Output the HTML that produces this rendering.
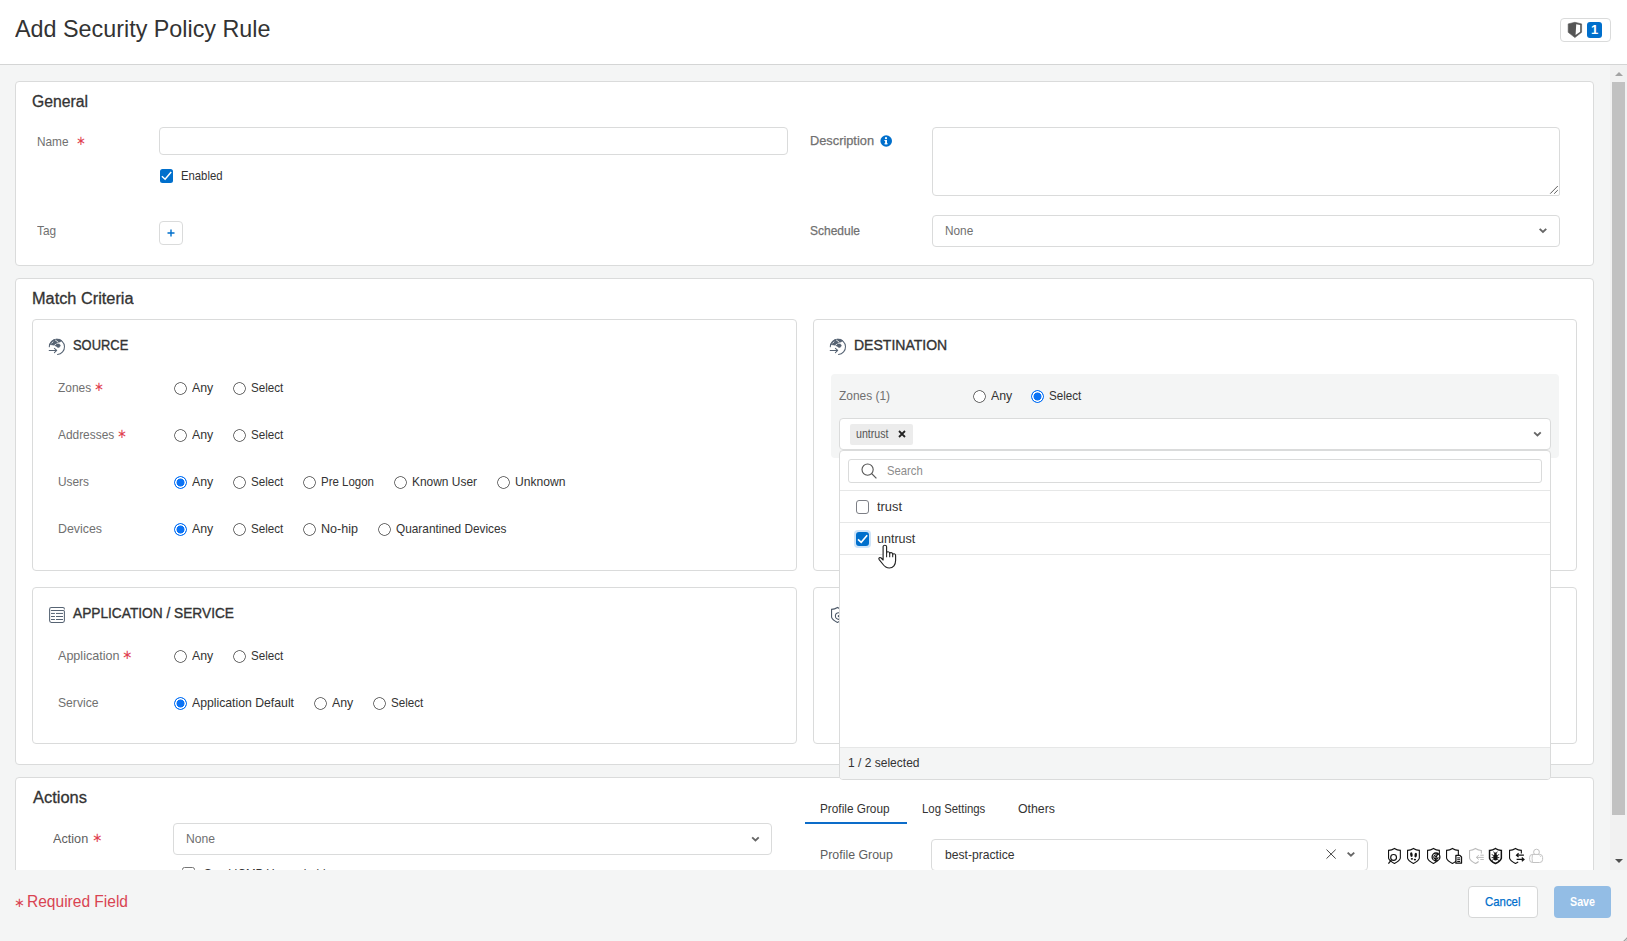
<!DOCTYPE html>
<html lang="en"><head>
<meta charset="utf-8">
<title>Add Security Policy Rule</title>
<style>
*{box-sizing:border-box;margin:0;padding:0}
html,body{width:1627px;height:941px;overflow:hidden;background:#f4f5f5}
body{font-family:"Liberation Sans",sans-serif;font-size:13px;color:#333;position:relative}
#app{position:absolute;left:0;top:0;width:1627px;height:941px;overflow:hidden;background:#f4f5f5}
.abs{position:absolute}
.t{position:absolute;white-space:nowrap;line-height:16px;height:16px;font-size:13px;color:#333;transform-origin:0 50%;transform:scaleX(0.91)}
.lbl{color:#707070}
.panel{position:absolute;background:#fff;border:1px solid #dadbdb;border-radius:4px}
.h1{position:absolute;white-space:nowrap;font-size:16px;line-height:20px;height:20px;color:#333;transform-origin:0 50%;transform:scaleX(0.93);-webkit-text-stroke:0.3px #333}
.h2{position:absolute;white-space:nowrap;font-size:14px;line-height:18px;height:18px;color:#333;transform-origin:0 50%;transform:scaleX(0.93);-webkit-text-stroke:0.35px #333}
.req{color:#df4150}
.ast{position:relative;top:-0.7px;margin-left:3px}
.b{-webkit-text-stroke:0.25px currentColor}
.inp{position:absolute;background:#fff;border:1px solid #dadbdb;border-radius:4px}
.radio{position:absolute;margin-top:1px;width:13px;height:13px;border-radius:50%;background:radial-gradient(circle at 50% 50%,#fff 0,#fff 5.05px,#6f6f6f 5.55px,#6f6f6f 6.2px,rgba(111,111,111,0) 6.75px)}
.radio.on{border:none;background:radial-gradient(circle at 50% 50%,#0b73f5 0,#0b73f5 3.7px,#fff 4.3px,#fff 5.0px,#0b73f5 5.5px,#0b73f5 6.3px,rgba(11,115,245,0) 6.8px)}
.cb{position:absolute;width:13px;height:13px;border:1px solid #767676;border-radius:2.5px;background:#fff}
.cb.on{border:none;background:#006fcc}
svg{position:absolute;overflow:visible}
</style>
</head>
<body>
<div id="app">

<!-- ============ HEADER ============ -->
<div class="abs" id="hdr" style="left:0;top:0;width:1627px;height:65px;background:#fff;border-bottom:1px solid #d4d5d5"></div>
<div class="abs" id="title" style="left: 14.6px; top: 14px; font-size: 24px; line-height: 30px; color: rgb(51, 51, 51); white-space: nowrap; transform-origin: 0px 50%; transform: scaleX(0.9723);">Add Security Policy Rule</div>
<div class="abs" id="badgebtn" style="left:1560px;top:18px;width:51px;height:24px;border:1px solid #dadbdb;border-radius:4px;background:#fff"></div>
<svg id="shield" style="left:1567px;top:22px" width="16" height="16" viewBox="0 0 16 16"><path d="M7.9 0.3 L14.6 1.9 V10.3 L7.9 15.6 L1.2 10.3 V1.9 Z" fill="#555" stroke="#555" stroke-width="0.6" stroke-linejoin="round"></path><path d="M9.2 2.3 L13.2 3.1 V9.7 L8.6 13.1 Z" fill="#fff"></path></svg>
<div class="abs" id="badge" style="left:1587px;top:22px;width:15px;height:16px;border-radius:3px;background:#006fcc;color:#fff;font-size:13px;line-height:16px;text-align:center;font-weight:bold">1</div>

<!-- ============ SCROLL AREA ============ -->
<div class="abs" id="scroll" style="left:0;top:65px;width:1611px;height:805px;overflow:hidden">
<div class="abs" id="inner" style="left:0;top:-65px;width:1611px;height:941px">

<!-- ===== GENERAL PANEL ===== -->
<div class="panel" id="p-general" style="left:15px;top:81px;width:1579px;height:185px"></div>
<div class="h1" style="left: 32px; top: 92px; transform: scaleX(0.9838);">General</div>
<div class="t lbl" style="left:37px;top:133.5px">Name<span class="req ast" style="margin-left:8px">∗</span></div>
<div class="inp" style="left:159px;top:127px;width:629px;height:28px"></div>
<div class="cb on" style="left:160px;top:169px;height:14px"></div>
<svg style="left:160px;top:169px" width="13" height="14" viewBox="0 0 13 14"><path d="M1.9 7.3 L5.1 10.2 L11.2 3.0" fill="none" stroke="#fff" stroke-width="1.5"></path></svg>
<div class="t" style="left: 181px; top: 168px; transform: scaleX(0.8697);">Enabled</div>
<div class="t lbl" style="left:37px;top:223px">Tag</div>
<div class="inp" style="left:159px;top:221px;width:24px;height:24px"></div>
<svg style="left:167px;top:229px" width="8" height="8" viewBox="0 0 8 8"><path d="M4 0.5 V7.5 M0.5 4 H7.5" stroke="#006fcc" stroke-width="1.4" fill="none"></path></svg>
<div class="t lbl b" style="left: 809.5px; top: 133px; transform: scaleX(0.9841);">Description</div>
<svg style="left:880px;top:135px" width="12" height="12" viewBox="0 0 12 12"><circle cx="6.2" cy="6" r="5.8" fill="#006fcc"></circle><rect x="5.1" y="5" width="1.9" height="4.2" fill="#fff"></rect><rect x="4.4" y="5" width="1.6" height="1" fill="#fff"></rect><rect x="4.4" y="8.3" width="3.3" height="1" fill="#fff"></rect><circle cx="6" cy="3.2" r="1.1" fill="#fff"></circle></svg>
<div class="inp" style="left:932px;top:127px;width:628px;height:69px;border-bottom-right-radius:2px"></div>
<svg style="left:1548px;top:185px" width="10" height="10" viewBox="0 0 10 10"><path d="M9.8 1.0 L2.2 8.7 M9.8 5.1 L6.2 8.7" stroke="#4a4a4a" stroke-width="0.9" fill="none"></path></svg>
<div class="t lbl b" style="left: 809.5px; top: 223px; transform: scaleX(0.9222);">Schedule</div>
<div class="inp" style="left:932px;top:215px;width:628px;height:32px"></div>
<div class="t lbl" style="left:945px;top:223px">None</div>
<svg class="chev" style="left:1538px;top:228px" width="10" height="7" viewBox="0 0 10 7"><path transform="translate(0.4,-0.4)" d="M1.25 1.3 L4.55 4.3 L7.85 1.3" fill="none" stroke="#666" stroke-width="1.9"></path></svg>

<!-- ===== MATCH CRITERIA PANEL ===== -->
<div class="panel" id="p-match" style="left:15px;top:278px;width:1579px;height:487px"></div>
<div class="h1" style="left: 32px; top: 289px; transform: scaleX(1.0193);">Match Criteria</div>
<div class="panel" id="b-source" style="left:32px;top:319px;width:765px;height:252px"></div>
<svg class="globe" style="left:48px;top:338px" width="18" height="18" viewBox="0 0 18 18"><g transform="translate(0.5,0.5)"><path d="M0.8 8.2 A7.6 7.6 0 1 1 9.0 16.0" fill="none" stroke="#566373" stroke-width="1.05" stroke-linecap="round"></path><path d="M1.5 6.0 L2.7 3.4 L4.9 1.5 L7.5 0.7 L10.8 0.8 L13.4 2.1 L11.6 3.4 L9.0 4.0 L7.9 5.4 L10.8 5.4 L11.9 7.1 L10.9 8.7 L9.4 9.1 L7.9 7.9 L6.0 6.8 L3.8 6.4 Z" fill="#566373" stroke="#566373" stroke-width="0.5" stroke-linejoin="round"></path><path d="M6.9 1.6 L9.4 3.4 M7.6 5.6 L6.2 6.6 M3.4 4.6 L4.4 3.4" stroke="#fff" stroke-width="0.8" stroke-linecap="round"></path><path d="M0.7 11.95 H8.0 M5.9 9.8 L8.2 11.95 L5.9 14.1" fill="none" stroke="#566373" stroke-width="1.05" stroke-linecap="round" stroke-linejoin="round"></path></g></svg>
<div class="h2" style="left: 73px; top: 336px; transform: scaleX(0.9231);">SOURCE</div>
<div class="t lbl" style="left: 58px; top: 380px; transform: scaleX(0.9174);">Zones<span class="req ast">∗</span></div>
<div class="radio" style="left:174px;top:381px"></div>
<div class="t" style="left: 192px; top: 380px; transform: scaleX(0.9506);">Any</div>
<div class="radio" style="left:233px;top:381px"></div>
<div class="t" style="left: 251px; top: 380px; transform: scaleX(0.8937);">Select</div>
<div class="t lbl" style="left: 58px; top: 427px; transform: scaleX(0.9149);">Addresses<span class="req ast">∗</span></div>
<div class="radio" style="left:174px;top:428px"></div>
<div class="t" style="left: 192px; top: 427px; transform: scaleX(0.9506);">Any</div>
<div class="radio" style="left:233px;top:428px"></div>
<div class="t" style="left: 251px; top: 427px; transform: scaleX(0.8937);">Select</div>
<div class="t lbl" style="left: 58px; top: 474px; transform: scaleX(0.913);">Users</div>
<div class="radio on" style="left:174px;top:475px"></div>
<div class="t" style="left: 192px; top: 474px; transform: scaleX(0.9506);">Any</div>
<div class="radio" style="left:233px;top:475px"></div>
<div class="t" style="left: 251px; top: 474px; transform: scaleX(0.8937);">Select</div>
<div class="radio" style="left:303px;top:475px"></div>
<div class="t" style="left: 321px; top: 474px; transform: scaleX(0.8833);">Pre Logon</div>
<div class="radio" style="left:394px;top:475px"></div>
<div class="t" style="left: 412px; top: 474px; transform: scaleX(0.9179);">Known User</div>
<div class="radio" style="left:497px;top:475px"></div>
<div class="t" style="left: 515px; top: 474px; transform: scaleX(0.9317);">Unknown</div>
<div class="t lbl" style="left: 58px; top: 521px; transform: scaleX(0.9514);">Devices</div>
<div class="radio on" style="left:174px;top:522px"></div>
<div class="t" style="left: 192px; top: 521px; transform: scaleX(0.9506);">Any</div>
<div class="radio" style="left:233px;top:522px"></div>
<div class="t" style="left: 251px; top: 521px; transform: scaleX(0.8937);">Select</div>
<div class="radio" style="left:303px;top:522px"></div>
<div class="t" style="left: 321px; top: 521px; transform: scaleX(0.9661);">No-hip</div>
<div class="radio" style="left:378px;top:522px"></div>
<div class="t" style="left: 396px; top: 521px; transform: scaleX(0.9102);">Quarantined Devices</div>
<div class="panel" id="b-dest" style="left:813px;top:319px;width:764px;height:252px"></div>
<svg class="globe" style="left:829px;top:338px" width="18" height="18" viewBox="0 0 18 18"><g transform="translate(0.5,0.5)"><path d="M0.8 8.2 A7.6 7.6 0 1 1 9.0 16.0" fill="none" stroke="#566373" stroke-width="1.05" stroke-linecap="round"></path><path d="M1.5 6.0 L2.7 3.4 L4.9 1.5 L7.5 0.7 L10.8 0.8 L13.4 2.1 L11.6 3.4 L9.0 4.0 L7.9 5.4 L10.8 5.4 L11.9 7.1 L10.9 8.7 L9.4 9.1 L7.9 7.9 L6.0 6.8 L3.8 6.4 Z" fill="#566373" stroke="#566373" stroke-width="0.5" stroke-linejoin="round"></path><path d="M6.9 1.6 L9.4 3.4 M7.6 5.6 L6.2 6.6 M3.4 4.6 L4.4 3.4" stroke="#fff" stroke-width="0.8" stroke-linecap="round"></path><path d="M0.7 11.95 H8.0 M5.9 9.8 L8.2 11.95 L5.9 14.1" fill="none" stroke="#566373" stroke-width="1.05" stroke-linecap="round" stroke-linejoin="round"></path></g></svg>
<div class="h2" style="left: 854px; top: 336px; transform: scaleX(1.0013);">DESTINATION</div>
<div class="abs" id="zonebg" style="left:831px;top:374px;width:728px;height:84px;background:#f4f5f5;border-radius:4px"></div>
<div class="t lbl" style="left: 838.5px; top: 388px; transform: scaleX(0.9166);">Zones (1)</div>
<div class="radio" style="left:973px;top:389px"></div>
<div class="t" style="left: 991px; top: 388px; transform: scaleX(0.9506);">Any</div>
<div class="radio on" style="left:1031px;top:389px"></div>
<div class="t" style="left: 1049px; top: 388px; transform: scaleX(0.8937);">Select</div>
<div class="inp" id="zonesel" style="left:839px;top:418px;width:712px;height:32px"></div>
<div class="abs" id="ztag" style="left:850px;top:424px;width:63px;height:21px;background:#ececec;border-radius:2px"></div>
<div class="t" style="left: 855.5px; top: 426px; font-size: 12px; color: rgb(85, 85, 85); transform: scaleX(0.8859);">untrust</div>
<svg style="left:898px;top:430px" width="8" height="8" viewBox="0 0 8 8"><path d="M1 1 L7 7 M7 1 L1 7" stroke="#222" stroke-width="1.8" fill="none"></path></svg>
<svg class="chev" style="left:1532px;top:431px" width="10" height="7" viewBox="0 0 10 7"><path transform="translate(0.9,0.1)" d="M1.25 1.3 L4.55 4.3 L7.85 1.3" fill="none" stroke="#666" stroke-width="1.9"></path></svg>
<div class="panel" id="b-app" style="left:32px;top:587px;width:765px;height:157px"></div>
<svg class="appi" style="left:48px;top:606px" width="18" height="18" viewBox="0 0 18 18"><path d="M16.4 3.0 V2.9 A1.5 1.5 0 0 0 14.9 1.4 H3.4 A1.8 1.8 0 0 0 1.6 3.2 V14.6 A1.8 1.8 0 0 0 3.4 16.4 H14.6 A1.8 1.8 0 0 0 16.4 14.6 V5.6 A1.1 1.1 0 0 0 15.3 4.5 H3.3" fill="none" stroke="#566373" stroke-width="1.05" stroke-linecap="round"></path><path d="M3.4 7.45 H6.5 M8.4 7.45 H14.6 M3.4 10.5 H6.5 M8.4 10.5 H14.6 M3.4 13.5 H6.5 M8.4 13.5 H14.6" stroke="#566373" stroke-width="1" stroke-linecap="round" fill="none"></path></svg>
<div class="h2" style="left: 73px; top: 604px; transform: scaleX(0.9792);">APPLICATION / SERVICE</div>
<div class="t lbl" style="left: 58px; top: 648px; transform: scaleX(0.9664);">Application<span class="req ast">∗</span></div>
<div class="radio" style="left:174px;top:649px"></div>
<div class="t" style="left: 192px; top: 648px; transform: scaleX(0.9506);">Any</div>
<div class="radio" style="left:233px;top:649px"></div>
<div class="t" style="left: 251px; top: 648px; transform: scaleX(0.8937);">Select</div>
<div class="t lbl" style="left: 58px; top: 695px; transform: scaleX(0.9341);">Service</div>
<div class="radio on" style="left:174px;top:696px"></div>
<div class="t" style="left: 192px; top: 695px; transform: scaleX(0.9409);">Application Default</div>
<div class="radio" style="left:314px;top:696px"></div>
<div class="t" style="left: 332px; top: 695px; transform: scaleX(0.9506);">Any</div>
<div class="radio" style="left:373px;top:696px"></div>
<div class="t" style="left: 391px; top: 695px; transform: scaleX(0.8937);">Select</div>
<div class="panel" id="b-misc" style="left:813px;top:587px;width:764px;height:157px"></div>
<svg style="left:830px;top:607px" width="17" height="17" viewBox="0 0 17 17"><path d="M7.45 0.5 C5.9 1.6 3.8 2.4 1.55 2.4 V10.2 Q2.3 13.0 7.45 15.5 Q12.6 13.0 13.35 10.2 V2.4 C11.1 2.4 9.0 1.6 7.45 0.5 Z" fill="none" stroke="#4d5968" stroke-width="1.1"></path><circle cx="8.7" cy="9.1" r="3.3" fill="none" stroke="#4d5968" stroke-width="1.1"></circle><circle cx="8.9" cy="9.1" r="1.2" fill="#4d5968"></circle></svg>
<!-- ===== ACTIONS PANEL ===== -->
<div class="panel" id="p-actions" style="left:15px;top:777px;width:1579px;height:300px"></div>
<div class="h1" style="left: 32.5px; top: 788px; transform: scaleX(1.0292);">Actions</div>
<div class="t lbl" style="left: 53px; top: 831px; color: rgb(94, 94, 94); transform: scaleX(0.9741);">Action<span class="req ast" style="margin-left:4.2px">∗</span></div>
<div class="inp" style="left:173px;top:823px;width:599px;height:32px"></div>
<div class="t lbl" style="left: 186px; top: 831px; transform: scaleX(0.9331);">None</div>
<svg class="chev" style="left:750px;top:836px" width="10" height="7" viewBox="0 0 10 7"><path transform="translate(0.9,0.1)" d="M1.25 1.3 L4.55 4.3 L7.85 1.3" fill="none" stroke="#666" stroke-width="1.9"></path></svg>
<div class="cb" style="left:182px;top:867px"></div>
<div class="t" style="left: 204px; top: 866px; transform: scaleX(0.8915);">Send ICMP Unreachable</div>
<div class="t" style="left: 820.3px; top: 801px; transform: scaleX(0.9074);">Profile Group</div>
<div class="abs" id="tabline" style="left:805px;top:822px;width:102px;height:2px;background:#0c6cc9"></div>
<div class="t" style="left: 922.3px; top: 801px; transform: scaleX(0.8757);">Log Settings</div>
<div class="t" style="left: 1018px; top: 801px; transform: scaleX(0.9483);">Others</div>
<div class="t lbl" style="left: 820.3px; top: 847px; color: rgb(94, 94, 94); transform: scaleX(0.9505);">Profile Group</div>
<div class="inp" style="left:931px;top:839px;width:437px;height:32px"></div>
<div class="t" style="left: 945px; top: 847px; transform: scaleX(0.9339);">best-practice</div>
<svg style="left:1326px;top:849px" width="11" height="11" viewBox="0 0 11 11"><path d="M0.5 0.6 L9.7 9.6 M9.7 0.6 L0.5 9.6" stroke="#444" stroke-width="1" fill="none"></path></svg>
<svg class="chev" style="left:1346px;top:852px" width="10" height="7" viewBox="0 0 10 7"><path transform="translate(0.4,-0.7)" d="M1.25 1.3 L4.55 4.3 L7.85 1.3" fill="none" stroke="#666" stroke-width="1.9"></path></svg>
<svg class="pi" style="left:1387px;top:848px" width="18" height="17" viewBox="0 0 18 17"><path d="M7.45 0.5 C5.9 1.6 3.8 2.4 1.55 2.4 V10.2 Q2.3 13.0 7.45 15.5 Q12.6 13.0 13.35 10.2 V2.4 C11.1 2.4 9.0 1.6 7.45 0.5 Z" fill="none" stroke="#111" stroke-width="1.1" stroke-linejoin="miter"></path><circle cx="6.6" cy="9.4" r="2.9" fill="#fff" stroke="#111" stroke-width="1.15"></circle><path d="M4.4 11.8 L1.4 15.7" stroke="#111" stroke-width="1.2"></path></svg>
<svg class="pi" style="left:1406px;top:848px" width="18" height="17" viewBox="0 0 18 17"><path d="M7.45 0.5 C5.9 1.6 3.8 2.4 1.55 2.4 V10.2 Q2.3 13.0 7.45 15.5 Q12.6 13.0 13.35 10.2 V2.4 C11.1 2.4 9.0 1.6 7.45 0.5 Z" fill="none" stroke="#111" stroke-width="1.1" stroke-linejoin="miter"></path><ellipse cx="5.4" cy="6.7" rx="1.25" ry="2.35" fill="#111" transform="rotate(-8 5.4 6.7)"></ellipse><ellipse cx="9.7" cy="7.2" rx="1.25" ry="2.35" fill="#111" transform="rotate(8 9.7 7.2)"></ellipse><ellipse cx="5.9" cy="10.8" rx="1.15" ry="0.85" fill="#111"></ellipse><ellipse cx="8.9" cy="11.6" rx="1.15" ry="0.85" fill="#111"></ellipse></svg>
<svg class="pi" style="left:1426px;top:848px" width="18" height="17" viewBox="0 0 18 17"><path d="M7.45 0.5 C5.9 1.6 3.8 2.4 1.55 2.4 V10.2 Q2.3 13.0 7.45 15.5 Q12.6 13.0 13.35 10.2 V2.4 C11.1 2.4 9.0 1.6 7.45 0.5 Z" fill="none" stroke="#111" stroke-width="1.1" stroke-linejoin="miter"></path><circle cx="10" cy="8.9" r="3.9" fill="#fff" stroke="#111" stroke-width="1.3"></circle><path d="M10 8.9 L13.1 6.2 A4.1 4.1 0 0 0 10.6 4.9 Z" fill="#111"></path><path d="M10.2 6.7 A2.2 2.2 0 1 0 12.2 9.1" fill="none" stroke="#111" stroke-width="1.1"></path><circle cx="10.1" cy="8.8" r="1.15" fill="#111"></circle><path d="M9.9 10 L9.5 13.6" stroke="#111" stroke-width="1.5"></path></svg>
<svg class="pi" style="left:1445px;top:848px" width="18" height="17" viewBox="0 0 18 17"><path d="M7.45 0.5 C5.9 1.6 3.8 2.4 1.55 2.4 V10.2 Q2.3 13.0 7.45 15.5 Q12.6 13.0 13.35 10.2 V2.4 C11.1 2.4 9.0 1.6 7.45 0.5 Z" fill="none" stroke="#111" stroke-width="1.1" stroke-linejoin="miter"></path><path d="M10.9 7.4 H14.9 L16.5 9.0 V15.2 H10.9 Z" fill="#fff" stroke="#111" stroke-width="1.3" stroke-linejoin="round"></path><path d="M12.2 9.9 H15.1 M12.2 11.7 H15.1 M12.2 13.5 H15.1" stroke="#111" stroke-width="1"></path></svg>
<svg class="pi" style="left:1468px;top:848px" width="18" height="17" viewBox="0 0 18 17"><path d="M13.35 5.6 V2.4 C11.1 2.4 9.0 1.6 7.45 0.5 C5.9 1.6 3.8 2.4 1.55 2.4 V10.2 Q2.3 13.0 7.45 15.5 Q9.2 14.7 10.6 13.5" fill="none" stroke="#bcbcbc" stroke-width="1.05" stroke-linejoin="miter"></path><path d="M8.4 9.4 H15.8 M10.8 7.2 L8.3 9.4 L10.8 11.5 M12.3 7.2 H15.8 M12.3 11.5 H15.8" fill="none" stroke="#bcbcbc" stroke-width="1"></path></svg>
<svg class="pi" style="left:1488px;top:848px" width="18" height="17" viewBox="0 0 18 17"><path d="M7.45 0.5 C5.9 1.6 3.8 2.4 1.55 2.4 V10.2 Q2.3 13.0 7.45 15.5 Q12.6 13.0 13.35 10.2 V2.4 C11.1 2.4 9.0 1.6 7.45 0.5 Z" fill="none" stroke="#111" stroke-width="1.5" stroke-linejoin="miter"></path><ellipse cx="7.45" cy="9.3" rx="2.2" ry="3.2" fill="#111"></ellipse><circle cx="7.45" cy="5.6" r="1.2" fill="#111"></circle><path d="M6.6 5.2 L5.6 3.6 M8.3 5.2 L9.3 3.6 M3.9 6.2 L5.6 8.0 M11.0 6.2 L9.3 8.0 M3.6 9.6 H5.4 M9.5 9.6 H11.3 M4.0 12.6 L5.8 11.0 M10.9 12.6 L9.1 11.0" stroke="#111" stroke-width="0.9" fill="none"></path></svg>
<svg class="pi" style="left:1508px;top:848px" width="18" height="17" viewBox="0 0 18 17"><path d="M13.35 5.4 V2.4 C11.1 2.4 9.0 1.6 7.45 0.5 C5.9 1.6 3.8 2.4 1.55 2.4 V10.2 Q2.3 13.0 7.45 15.5 Q9.0 14.8 10.2 13.9" fill="none" stroke="#111" stroke-width="1.1" stroke-linejoin="miter"></path><path d="M8.6 7.2 H15.9 M10.6 5.3 L8.5 7.2 L10.6 9.1 M8.6 11.4 H15.9 M13.8 9.5 L16.0 11.4 L13.8 13.3" fill="none" stroke="#111" stroke-width="1.2"></path></svg>
<svg class="pi" style="left:1529px;top:848px" width="16" height="17" viewBox="0 0 16 17"><circle cx="7.5" cy="4.1" r="2.9" fill="#fff" stroke="#c2c2c2" stroke-width="1"></circle><rect x="0.6" y="6.4" width="13" height="8.1" rx="3" fill="#fff" stroke="#c2c2c2" stroke-width="1"></rect><path d="M3.5 6.4 Q2.6 10.4 3.5 14.4" fill="none" stroke="#c2c2c2" stroke-width="0.9"></path><path d="M10.6 7.6 L11.8 8.8" stroke="#c2c2c2" stroke-width="0.9"></path></svg>
<!-- ===== ZONES DROPDOWN ===== -->
<div class="abs" id="dd" style="left:839px;top:450px;width:712px;height:330px;background:#fff;border:1px solid #dadbdb;border-radius:4px"></div>
<div class="inp" id="ddsearch" style="left:848px;top:459px;width:694px;height:24px;border-radius:3px"></div>
<svg style="left:861px;top:463px" width="16" height="16" viewBox="0 0 16 16"><circle cx="6.6" cy="6.6" r="5.6" fill="none" stroke="#555" stroke-width="1.1"></circle><path d="M10.7 10.7 L15.4 15.4" stroke="#555" stroke-width="1.2"></path></svg>
<div class="t" style="left: 887px; top: 463px; color: rgb(140, 140, 140); transform: scaleX(0.8664);">Search</div>
<div class="abs" style="left:840px;top:490px;width:710px;height:1px;background:#e6e7e7"></div>
<div class="cb" style="left:856px;top:500px;border-radius:3px;width:13px;height:14px;border-color:#7d7f86"></div>
<div class="t" style="left: 876.5px; top: 499px; transform: scaleX(0.9883);">trust</div>
<div class="abs" style="left:840px;top:522px;width:710px;height:1px;background:#e6e7e7"></div>
<div class="abs" id="cbfocus" style="left:854px;top:530px;width:17px;height:18px;border-radius:4px;background:#cfe4f8"></div>
<div class="cb on" style="left:856px;top:532px;border-radius:3px;width:13px;height:14px"></div>
<svg style="left:856px;top:532px" width="13" height="14" viewBox="0 0 13 14"><path d="M2.0 7.3 L5.2 10.3 L11.2 3.2" fill="none" stroke="#fff" stroke-width="1.6"></path></svg>
<div class="t" style="left: 876.5px; top: 531px; transform: scaleX(0.9635);">untrust</div>
<div class="abs" style="left:840px;top:554px;width:710px;height:1px;background:#e6e7e7"></div>
<div class="abs" id="ddfoot" style="left:840px;top:747px;width:710px;height:32px;background:#f4f5f5;border-top:1px solid #e6e7e7;border-radius:0 0 3px 3px"></div>
<div class="t" style="left: 847.5px; top: 755px; transform: scaleX(0.9246);">1 / 2 selected</div>
<svg id="cursor" style="left:878px;top:544px" width="19" height="25" viewBox="0 0 19 25"><g transform="translate(0.3,0.6)"><path d="M4.8 2.2 C4.8 0.2 8.3 0.2 8.3 2.2 V8.4 C8.3 6.6 11.4 6.8 11.4 8.8 V9.2 C11.4 7.4 14.4 7.6 14.4 9.6 V10.2 C14.4 8.6 17.3 8.8 17.3 10.8 V16.0 C17.3 20.0 15.0 23.4 11.0 23.4 C7.6 23.4 6.0 21.6 4.4 19.4 L0.9 15.0 C-0.2 13.4 1.6 12.2 2.9 13.4 L4.8 15.4 Z" fill="#fff" stroke="#222" stroke-width="1.15" stroke-linejoin="round"></path><path d="M8.3 8.4 V12.6 M11.4 9.2 V12.6 M14.4 10.2 V12.6" stroke="#222" stroke-width="1.05" fill="none"></path></g></svg>
</div>
</div>

<!-- ============ SCROLLBAR ============ -->
<div class="abs" id="sbtrack" style="left:1610px;top:65px;width:17px;height:805px;background:#f1f1f1"></div>
<div class="abs" id="sbthumb" style="left:1612px;top:82px;width:13px;height:733px;background:#c1c1c1"></div>
<svg style="left:1614.5px;top:72px" width="8" height="4" viewBox="0 0 8 4"><path d="M0 4 L4 0 L8 4 Z" fill="#a3a3a3"></path></svg>
<svg style="left:1614.5px;top:859px" width="8" height="4" viewBox="0 0 8 4"><path d="M0 0 L4 4 L8 0 Z" fill="#505050"></path></svg>

<!-- ============ FOOTER ============ -->
<div class="abs" id="ftr" style="left:0;top:870px;width:1627px;height:71px;background:#f4f5f5"></div>
<div class="abs" id="reqast" style="left:14px;top:892px;font-size:13px;line-height:22px;color:#d94452;white-space:nowrap">∗</div>
<div class="abs" id="reqfield" style="left: 27px; top: 891px; font-size: 16px; line-height: 22px; color: rgb(217, 68, 82); white-space: nowrap; transform-origin: 0px 50%; transform: scaleX(0.9706);">Required Field</div>
<div class="abs" id="cancel" style="left:1468px;top:886px;width:70px;height:32px;border:1px solid #d6d7d7;border-radius:4px;background:#fff"></div>
<div class="t b" id="cancelt" style="left: 1485.3px; top: 893.5px; color: rgb(0, 111, 204); transform: scaleX(0.8772);">Cancel</div>
<div class="abs" id="save" style="left:1554px;top:886px;width:57px;height:32px;border-radius:4px;background:#93bde5"></div>
<div class="t" id="savet" style="left: 1569.5px; top: 893.5px; color: rgb(255, 255, 255); font-weight: bold; transform: scaleX(0.823);">Save</div>
<!-- window corner -->
<svg style="left:1619px;top:933px" width="8" height="8" viewBox="0 0 8 8"><path d="M8 4.5 A8.5 8.5 0 0 1 4.5 8 H8 Z" fill="#cfcfcf"></path><path d="M8 4.5 A8.5 8.5 0 0 1 4.5 8" fill="none" stroke="#8f8f8f" stroke-width="1"></path></svg>

</div>


</body></html>
